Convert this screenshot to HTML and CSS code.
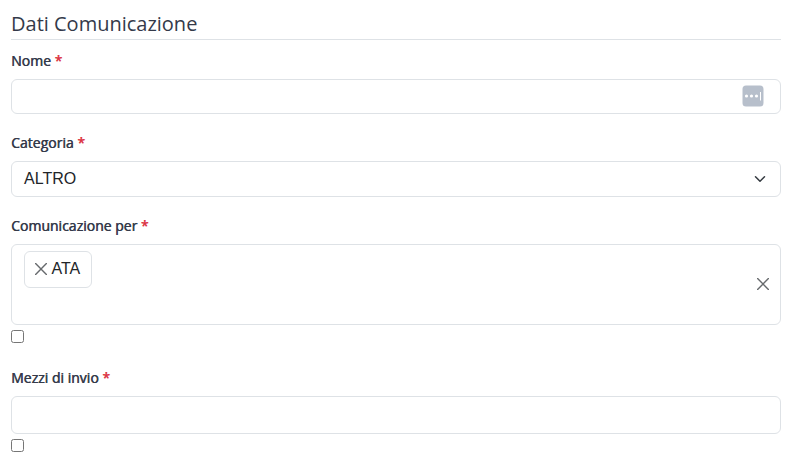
FILE: index.html
```html
<!DOCTYPE html>
<html lang="it">
<head>
<meta charset="utf-8">
<title>Dati Comunicazione</title>
<link rel="stylesheet" href="styles.css">
</head>
<body>
<form class="form">
  <h2 class="title">Dati Comunicazione</h2>
  <div class="field field-name">
    <div class="label">Nome <span class="req">*</span></div>
    <div class="control control-text">
      <svg class="autofill" width="22" height="22" viewBox="0 0 22 22"><rect x=".5" y=".5" width="21" height="21" rx="3.5" fill="#b7bfcb"/><g fill="#fff"><circle cx="4.500" cy="11" r="1.600"/><circle cx="9.500" cy="11" r="1.600"/><circle cx="14.500" cy="11" r="1.600"/><rect x="18" y="7" width="1" height="8.500"/></g></svg>
    </div>
  </div>
  <div class="field field-category">
    <div class="label">Categoria <span class="req">*</span></div>
    <div class="control control-select">
      <span>ALTRO</span>
      <svg width="12" height="12" viewBox="0 0 16 16" fill="none" stroke="#343a40" stroke-width="2" stroke-linecap="round" stroke-linejoin="round"><path d="m2 5 6 6 6-6"/></svg>
    </div>
  </div>
  <div class="field field-target">
    <div class="label">Comunicazione per <span class="req">*</span></div>
    <div class="control control-multi">
      <span class="tag"><svg width="12" height="12" viewBox="0 0 12 12" stroke="#676a6d" stroke-width="1.4" stroke-linecap="round"><path d="M.6.6 11.400 11.400M11.400.6.6 11.400"/></svg><span>ATA</span></span>
      <svg class="clear" width="12" height="12" viewBox="0 0 12 12" stroke="#676a6d" stroke-width="1.4" stroke-linecap="round"><path d="M.6.6 11.400 11.400M11.400.6.6 11.400"/></svg>
    </div>
    <input class="check" type="checkbox">
  </div>
  <div class="field field-channel">
    <div class="label">Mezzi di invio <span class="req">*</span></div>
    <div class="control control-empty"></div>
    <input class="check" type="checkbox">
  </div>
</form>
</body>
</html>
```
FILE: styles.css
```css
* { box-sizing: border-box; }
body {
  margin: 0;
  background: #fff;
  color: #343a4a;
  font-family: "Open Sans", sans-serif;
}
.form { padding: 9px 14px 0 11px; }
.title {
  height: 31px;
  margin: 0 0 10px;
  border-bottom: 1px solid #dee2e6;
  font-size: 20px;
  font-weight: 400;
  line-height: 30px;
}
.label {
  height: 29px;
  font-size: 14px;
  font-weight: 400;
  line-height: 21px;
  text-shadow: 0.5px 0 0 currentColor;
}
.req { color: #dc3545; text-shadow: 0.5px 0 0 currentColor; }
.field { display: flex; flex-direction: column; }
.field-name { margin-bottom: 18px; }
.field-category { margin-bottom: 18px; }
.field-target { margin-bottom: 24px; }
.control {
  display: flex;
  border: 1px solid #dee2e6;
  border-radius: 6px;
  color: #212529;
  font: 16px/24px "Liberation Sans", sans-serif;
}
.control svg { display: block; flex: none; }
.control-text {
  height: 35px;
  align-items: center;
  justify-content: flex-end;
  padding: 0 16px 1px 0;
}
.control-select {
  height: 36px;
  align-items: center;
  justify-content: space-between;
  padding: 0 14px 0 12px;
}
.control-multi {
  height: 81px;
  align-items: flex-start;
  justify-content: space-between;
  padding: 6px 11px 6px 12px;
}
.tag {
  display: flex;
  align-items: center;
  gap: 4.5px;
  width: 68px;
  height: 37px;
  padding: 0 0 2px 10px;
  border: 1px solid #dee2e6;
  border-radius: 6px;
}
.tag svg { margin-top: 1px; }
.control-multi .clear { align-self: center; margin-bottom: 2px; }
.control-empty { height: 38px; }
.check { width: 13px; height: 13px; margin: 5px 0 0; }
```
